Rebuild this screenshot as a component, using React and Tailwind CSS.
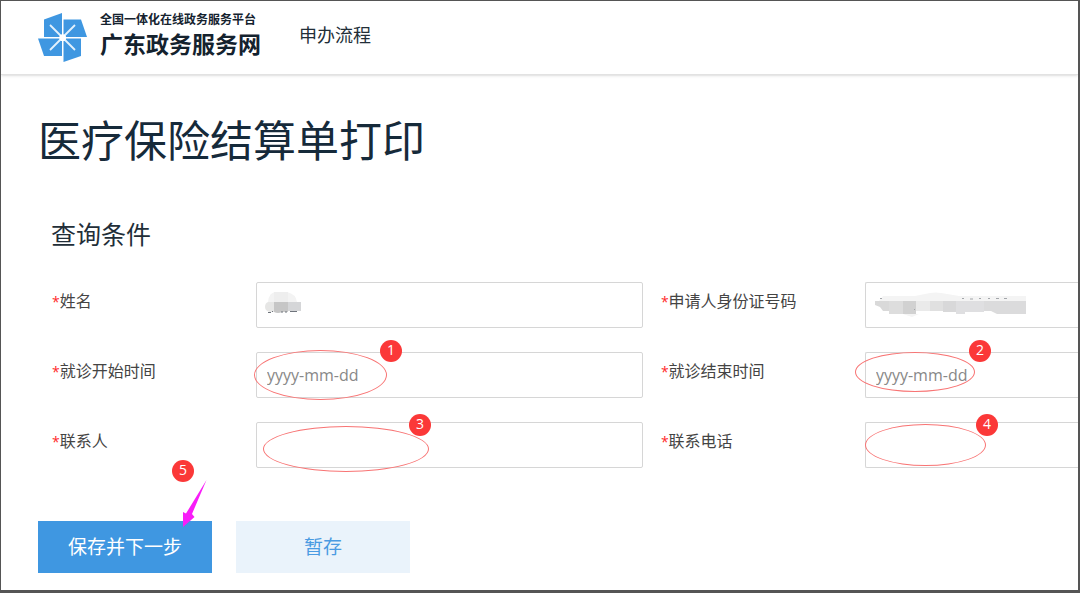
import React, { useState } from "react";

const fields = [
  { id: "name", label: "姓名", mask: "name" },
  { id: "idNumber", label: "申请人身份证号码", mask: "id" },
  {
    id: "startDate",
    label: "就诊开始时间",
    placeholder: "yyyy-mm-dd",
    mark: 1,
    ring: "-left-0.5 -top-0.5 w-[133px] h-[50px]",
    badge: "left-[124px] -top-3",
  },
  {
    id: "endDate",
    label: "就诊结束时间",
    placeholder: "yyyy-mm-dd",
    mark: 2,
    ring: "-left-2.5 top-0 w-[120px] h-10",
    badge: "left-[104px] -top-3",
  },
  {
    id: "contact",
    label: "联系人",
    mark: 3,
    ring: "left-[7px] top-1 w-[166px] h-[46px]",
    badge: "left-[153px] -top-2",
  },
  {
    id: "phone",
    label: "联系电话",
    mark: 4,
    ring: "left-0 top-0.5 w-[121px] h-[42px]",
    badge: "left-[111px] -top-2",
  },
];

function Logo() {
  return (
    <svg width="50" height="50" viewBox="0 0 50 50" aria-hidden="true">
      <g fill="#3f97e1">
        <path d="M6 6.5 L24 0 V24 H6 Z" />
        <path d="M25.5 6.5 H43 L49 24 H25.5 Z" />
        <path d="M0 25.5 H24 V43 H6 Z" />
        <path d="M25.5 25.5 H43 V43 L25.5 49 Z" />
      </g>
      <path d="M12 12 L37 37 M37 12 L12 37" stroke="#e3f1fc" strokeWidth="1.8" />
      <circle cx="24.7" cy="24.7" r="3.4" fill="#fff" />
    </svg>
  );
}

function NameMask() {
  return (
    <svg className="absolute left-2 top-2 pointer-events-none" width="38" height="24" viewBox="0 0 38 24" aria-hidden="true">
      <path d="M4 12 Q5 2 12 2 H23 Q32 4 33 12 Z" fill="#f3f3f3" />
      <path d="M10 2 H24 V12 H10 Z" fill="#eeeeee" />
      <path d="M10 12 H4 Q1 13 1 17 Q1 21 6 22 H10 Z" fill="#e6e6e5" />
      <path d="M10 12 H24 V22 H18 Q14 24 10 22 Z" fill="#c6c6c6" />
      <path d="M24 12 H37 V21 H24 Z" fill="#d5d6d8" />
      <path d="M4 22.5 H7 M8 21.5 H9 M17 22 H19 M21 22 H23 M26 21.5 H33" stroke="#6f747c" strokeWidth="1" />
    </svg>
  );
}

function IdMask() {
  return (
    <svg className="absolute left-2.5 top-2.5 pointer-events-none" width="154" height="26" viewBox="0 0 154 26" aria-hidden="true">
      <path d="M4 9 L8 4 H40 L50 2 Q60 -1 72 2 L84 4 H151 V9 Z" fill="#f4f4f4" />
      <path d="M28 22 H44 L37 25 Z" fill="#f4f4f4" />
      <path d="M0 9 H14 V19 L8 19 L5 15 L0 13 Z" fill="#d9d9d9" />
      <rect x="14" y="9" width="14" height="13" fill="#dddddd" />
      <rect x="28" y="9" width="13" height="13" fill="#d1d1d1" />
      <rect x="41" y="9" width="14" height="10" fill="#eaeaea" />
      <rect x="55" y="9" width="13" height="10" fill="#e0e0e0" />
      <rect x="68" y="9" width="13" height="11" fill="#d8d8d9" />
      <path d="M81 9 H109 V20 H90 V22 H81 Z" fill="#dfdfe1" />
      <path d="M109 9 H151 V22 H122 L116 19 H109 Z" fill="#dbdbdc" />
      <path d="M5 6.5 H7 M87 6.5 H89 M95 7 H98 M104 6.5 H106 M113 6.5 H115 M121 6.5 H124 M129 6.5 H132 M39 17.5 H40" stroke="#a3a6aa" strokeWidth="1" />
    </svg>
  );
}

function Badge({ number, className }) {
  return (
    <span
      className={`absolute flex w-[22px] h-[22px] items-center justify-center rounded-full bg-[#fb3838] pb-0.5 text-sm leading-none text-white pointer-events-none ${className}`}
    >
      {number}
    </span>
  );
}

function Field({ field, value, onChange, last }) {
  return (
    <div className="flex">
      <label htmlFor={field.id} className="w-[204px] shrink-0 pt-[7px] text-base text-[#444]">
        <span className="text-sm text-[#ff2a2a]">*</span>
        {field.label}
      </label>
      <div className="relative min-w-0 flex-1">
        <input
          id={field.id}
          type="text"
          value={value}
          onChange={onChange}
          placeholder={field.placeholder}
          className={`block w-full h-[46px] border border-[#d6d6d6] bg-white px-2.5 text-base text-[#444] outline-none placeholder:text-[#888] ${
            last ? "rounded-l-xs border-r-0" : "rounded-xs"
          }`}
        />
        {field.mask === "name" && <NameMask />}
        {field.mask === "id" && <IdMask />}
        {field.mark && (
          <>
            <span className={`absolute rounded-[50%] border border-[#f87474] pointer-events-none ${field.ring}`} />
            <Badge number={field.mark} className={field.badge} />
          </>
        )}
      </div>
    </div>
  );
}

export default function App() {
  const [form, setForm] = useState({});

  return (
    <div className="flex min-h-screen flex-col overflow-hidden border-t border-r-2 border-b-3 border-l border-[#555] bg-white font-['Open_Sans','Noto_Sans_CJK_SC',sans-serif]">
      {/* Header */}
      <header className="flex h-[74px] shrink-0 items-center border-b border-[#e2e2e2] pl-[37px] shadow-sm">
        <a href="#" className="flex items-center gap-3 text-[#14222e]">
          <Logo />
          <span className="flex flex-col pb-1 font-bold">
            <span className="text-xs leading-4">全国一体化在线政务服务平台</span>
            <span className="text-[23px] leading-8">广东政务服务网</span>
          </span>
        </a>
        <nav className="ml-[38px] pb-1.5">
          <a href="#" className="text-lg text-[#222e38]">申办流程</a>
        </nav>
      </header>

      <main className="pl-[37px]">
        <h1 className="mt-9 text-[43px] leading-[60px] text-[#162a3a]">医疗保险结算单打印</h1>

        <form onSubmit={(e) => e.preventDefault()}>
          <div className="pl-[13px]">
            <h2 className="mt-[47px] text-[25px] leading-8 text-[#222e38]">查询条件</h2>
            <div className="mt-8 grid grid-cols-[17fr_12fr] gap-x-[18px] gap-y-6 pl-px">
              {fields.map((field, i) => (
                <Field
                  key={field.id}
                  field={field}
                  last={i % 2 === 1}
                  value={form[field.id] || ""}
                  onChange={(e) => setForm({ ...form, [field.id]: e.target.value })}
                />
              ))}
            </div>
          </div>

          {/* Actions */}
          <div className="mt-[53px] flex gap-6 text-[19px]">
            <div className="relative">
              <button type="submit" className="h-[52px] w-[174px] bg-[#3f97e1] text-white">
                保存并下一步
              </button>
              <Badge number={5} className="left-[134px] -top-[61px]" />
              <svg className="absolute left-[144px] -top-[42px] pointer-events-none" width="26" height="50" viewBox="0 0 26 50" aria-hidden="true">
                <path d="M24.5 1 L10 35 L12.5 38 L1 48 L1 33 L4 34.5 Z" fill="#f81df8" />
              </svg>
            </div>
            <button type="button" className="h-[52px] w-[174px] bg-[#eaf3fb] text-[#4a9be2]">
              暂存
            </button>
          </div>
        </form>
      </main>
    </div>
  );
}
